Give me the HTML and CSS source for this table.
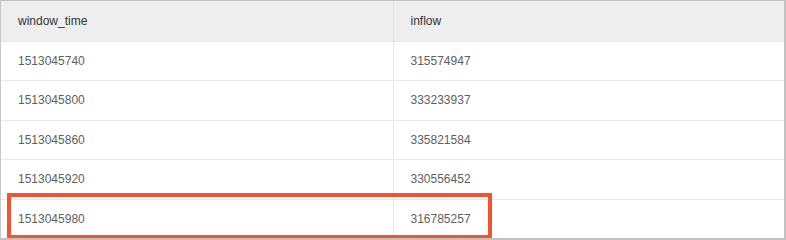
FILE: index.html
```html
<!DOCTYPE html>
<html>
<head>
<meta charset="utf-8">
<link rel="stylesheet" href="styles.css">
</head>
<body>
<div class="frame">
  <table class="grid">
    <thead>
      <tr><th>window_time</th><th>inflow</th></tr>
    </thead>
    <tbody>
      <tr class="r-a"><td>1513045740</td><td>315574947</td></tr>
      <tr class="r-b"><td>1513045800</td><td>333233937</td></tr>
      <tr class="r-a"><td>1513045860</td><td>335821584</td></tr>
      <tr class="r-b"><td>1513045920</td><td>330556452</td></tr>
      <tr class="r-a"><td>1513045980</td><td>316785257</td></tr>
    </tbody>
  </table>
  <div class="highlight"></div>
</div>
</body>
</html>
```
FILE: styles.css
```css
html, body {
  margin: 0;
  padding: 0;
  background: #ffffff;
}
.frame {
  position: relative;
  width: 786px;
  height: 240px;
  box-sizing: border-box;
  border-top: 1px solid #c2c2c2;
  border-left: 1px solid #c8c8c8;
  border-right: 2px solid #c2c2c2;
  border-bottom: 2px solid #c2c2c2;
  overflow: hidden;
}
.grid {
  width: 783px;
  border-collapse: collapse;
  table-layout: fixed;
  font-family: "Liberation Sans", Arial, sans-serif;
  font-size: 12px;
}
.grid th {
  background: #eeeeee;
  color: #333333;
  font-weight: normal;
  text-align: left;
  height: 40px;
  padding: 0 0 0 17px;
  box-sizing: border-box;
  border-bottom: 1px solid #e6e6e6;
}
.grid th:first-child, .grid td:first-child {
  width: 392px;
}
.grid td {
  color: #5e5e5e;
  padding: 0 0 0 17px;
  box-sizing: border-box;
  border-bottom: 1px solid #e8e8e8;
}
.grid td:first-child {
  border-right: 1px solid #e8e8e8;
}
.grid th:first-child {
  border-right: 1px solid #e6e6e6;
}
.r-a td { height: 39px; }
.r-b td { height: 40px; }
.highlight {
  position: absolute;
  left: 6px;
  top: 192px;
  width: 485px;
  height: 46px;
  box-sizing: border-box;
  border: 4px solid #f4532f;
}
```
